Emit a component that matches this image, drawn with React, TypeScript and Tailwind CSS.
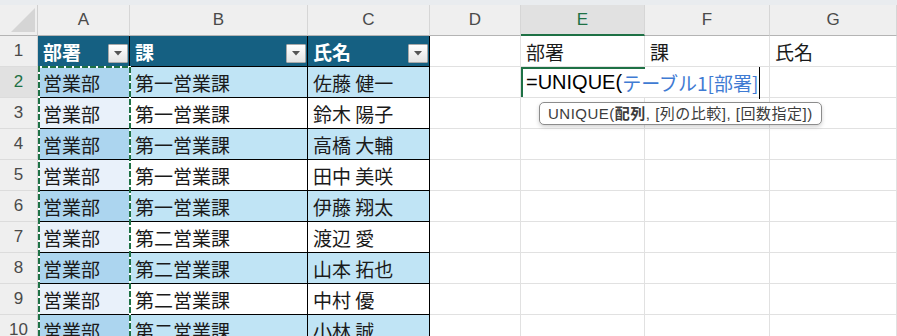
import React from 'react'

// column widths (include the 1px right border)
const W = ['w-[92px]', 'w-[178px]', 'w-[122px]', 'w-[91px]', 'w-[124px]', 'w-[125px]', 'w-[127px]']
const LETTERS = ['A', 'B', 'C', 'D', 'E', 'F', 'G']

const names = ['佐藤 健一', '鈴木 陽子', '高橋 大輔', '田中 美咲', '伊藤 翔太', '渡辺 愛', '山本 拓也', '中村 優', '小林 誠']

const jp = { fontFamily: '"Noto Sans CJK JP", sans-serif' }
const latin = { fontFamily: '"Liberation Sans", "Noto Sans CJK JP", sans-serif' }

const FilterButton = () => (
  <div className="ml-auto mr-[1px] mt-[5px] flex h-[19px] w-[20px] shrink-0 items-center justify-center rounded-[1px] border border-[#a9a9a9] bg-gradient-to-b from-white to-[#e4e4e4]">
    <svg width="8" height="5" viewBox="0 0 8 5">
      <path d="M0 0 L8 0 L4 4.5 Z" fill="#555" />
    </svg>
  </div>
)

const Row = ({ r }: { r: number }) => {
  const band = r % 2 === 0
  const head = r === 1
  const a = head ? 'bg-[#156082]' : band ? 'bg-[#acd5ef]' : 'bg-[#e9f1fa]'
  const bc = head ? 'bg-[#156082]' : band ? 'bg-[#c0e4f5]' : 'bg-white'
  const tableCell = 'flex h-[31px] shrink-0 items-center border-r border-b border-black pl-[5px] text-[19px] leading-none'
  const gridCell = 'flex h-[31px] shrink-0 items-center border-r border-b border-[#e1e1e1] pl-[5px] text-[19px] leading-none text-[#1a1a1a]'

  return (
    <div className="flex">
      <div
        className={`flex h-[31px] w-[38px] shrink-0 items-center justify-center border-r border-b border-r-[#d0d0d0] border-b-[#dcdcdc] text-[17px] ${
          r === 2 ? 'bg-[#e1e1e1] text-[#1e7145]' : 'bg-[#efefef] text-[#4a4a4a]'
        }`}
        style={latin}
      >
        {r}
      </div>

      {head ? (
        <>
          <div className={`${W[0]} ${tableCell} ${a} font-bold text-white`} style={jp}>
            部署
            <FilterButton />
          </div>
          <div className={`${W[1]} ${tableCell} ${bc} font-bold text-white`} style={jp}>
            課
            <FilterButton />
          </div>
          <div className={`${W[2]} ${tableCell} ${bc} font-bold text-white`} style={jp}>
            氏名
            <FilterButton />
          </div>
          <div className={`${W[3]} ${gridCell}`} />
          <div className={`${W[4]} ${gridCell}`} style={jp}>部署</div>
          <div className={`${W[5]} ${gridCell}`} style={jp}>課</div>
          <div className={`${W[6]} ${gridCell}`} style={jp}>氏名</div>
        </>
      ) : (
        <>
          <div className={`${W[0]} ${tableCell} ${a} text-[#1a1a1a]`} style={jp}>営業部</div>
          <div className={`${W[1]} ${tableCell} ${bc} text-[#1a1a1a]`} style={jp}>
            {r <= 6 ? '第一営業課' : '第二営業課'}
          </div>
          <div className={`${W[2]} ${tableCell} ${bc} text-[#1a1a1a]`} style={jp}>{names[r - 2]}</div>
          <div className={`${W[3]} ${gridCell}`} />
          {r === 2 ? (
            <>
              {/* active cell in edit mode, text runs into F */}
              <div className={`${W[4]} flex h-[31px] shrink-0 items-center overflow-visible whitespace-nowrap border-b border-[#e1e1e1] bg-white pl-[5px] leading-none shadow-[inset_2px_2px_0_#1e7145]`}>
                <span className="text-[20px] text-black" style={latin}>=UNIQUE(</span>
                <span className="text-[19px] text-[#3f7bd3]" style={jp}>テーブル1[部署]</span>
                <span className="ml-[1px] h-[32px] w-[1px] shrink-0 translate-y-[1px] bg-black" />
              </div>
              <div className={`${W[5]} ${gridCell}`} />
              <div className={`${W[6]} ${gridCell}`} />
            </>
          ) : (
            <>
              <div className={`${W[4]} ${gridCell}`} />
              <div className={`${W[5]} ${gridCell}`} />
              <div className={`${W[6]} ${gridCell}`} />
            </>
          )}
        </>
      )}
    </div>
  )
}

export default function App() {
  return (
    <div className="relative h-[336px] w-[897px] overflow-hidden bg-white">
      <div className="h-[5px] bg-[#e9ecef]" />

      {/* column letters */}
      <div className="flex">
        <div className="flex h-[31px] w-[38px] shrink-0 items-end justify-end border-r border-b border-r-[#d0d0d0] border-b-[#b4b4b4] bg-[#efefef] pb-[3px] pr-[2px]">
          <svg width="24" height="24" viewBox="0 0 24 24">
            <path d="M24 0 L24 24 L0 24 Z" fill="#d5d5d5" />
          </svg>
        </div>
        {LETTERS.map((l, i) =>
          l === 'E' ? (
            <div
              key={l}
              className={`${W[i]} flex h-[31px] shrink-0 items-center justify-center border-r border-b-2 border-r-[#d6d6d6] border-b-[#1e7145] bg-[#e1e1e1] text-[17px] text-[#1e7145]`}
              style={latin}
            >
              {l}
            </div>
          ) : (
            <div
              key={l}
              className={`${W[i]} flex h-[31px] shrink-0 items-center justify-center border-r border-b border-r-[#d6d6d6] border-b-[#b4b4b4] bg-[#efefef] text-[17px] text-[#4a4a4a]`}
              style={latin}
            >
              {l}
            </div>
          )
        )}
      </div>

      {[1, 2, 3, 4, 5, 6, 7, 8, 9, 10].map((r) => (
        <Row key={r} r={r} />
      ))}

      {/* copy marquee round A2:A10 */}
      <svg className="pointer-events-none absolute left-[38px] top-[66px]" width="94" height="270">
        <path d="M1 270 V1 H92 V270" fill="none" stroke="#fff" strokeWidth="2" />
        <path d="M1 270 V1 H92 V270" fill="none" stroke="#1e7145" strokeWidth="2" strokeDasharray="6 2" />
      </svg>

      {/* function hint */}
      <div
        className="absolute left-[539px] top-[102px] flex h-[23px] items-center whitespace-nowrap rounded-[5px] border border-[#8c8c8c] bg-white px-[8px] text-[15px] leading-none tracking-[0.5px] text-[#3c3c3c] shadow-[0_2px_4px_rgba(0,0,0,0.18)]"
        style={latin}
      >
        UNIQUE(<b>配列</b>, [列の比較], [回数指定])
      </div>
    </div>
  )
}
